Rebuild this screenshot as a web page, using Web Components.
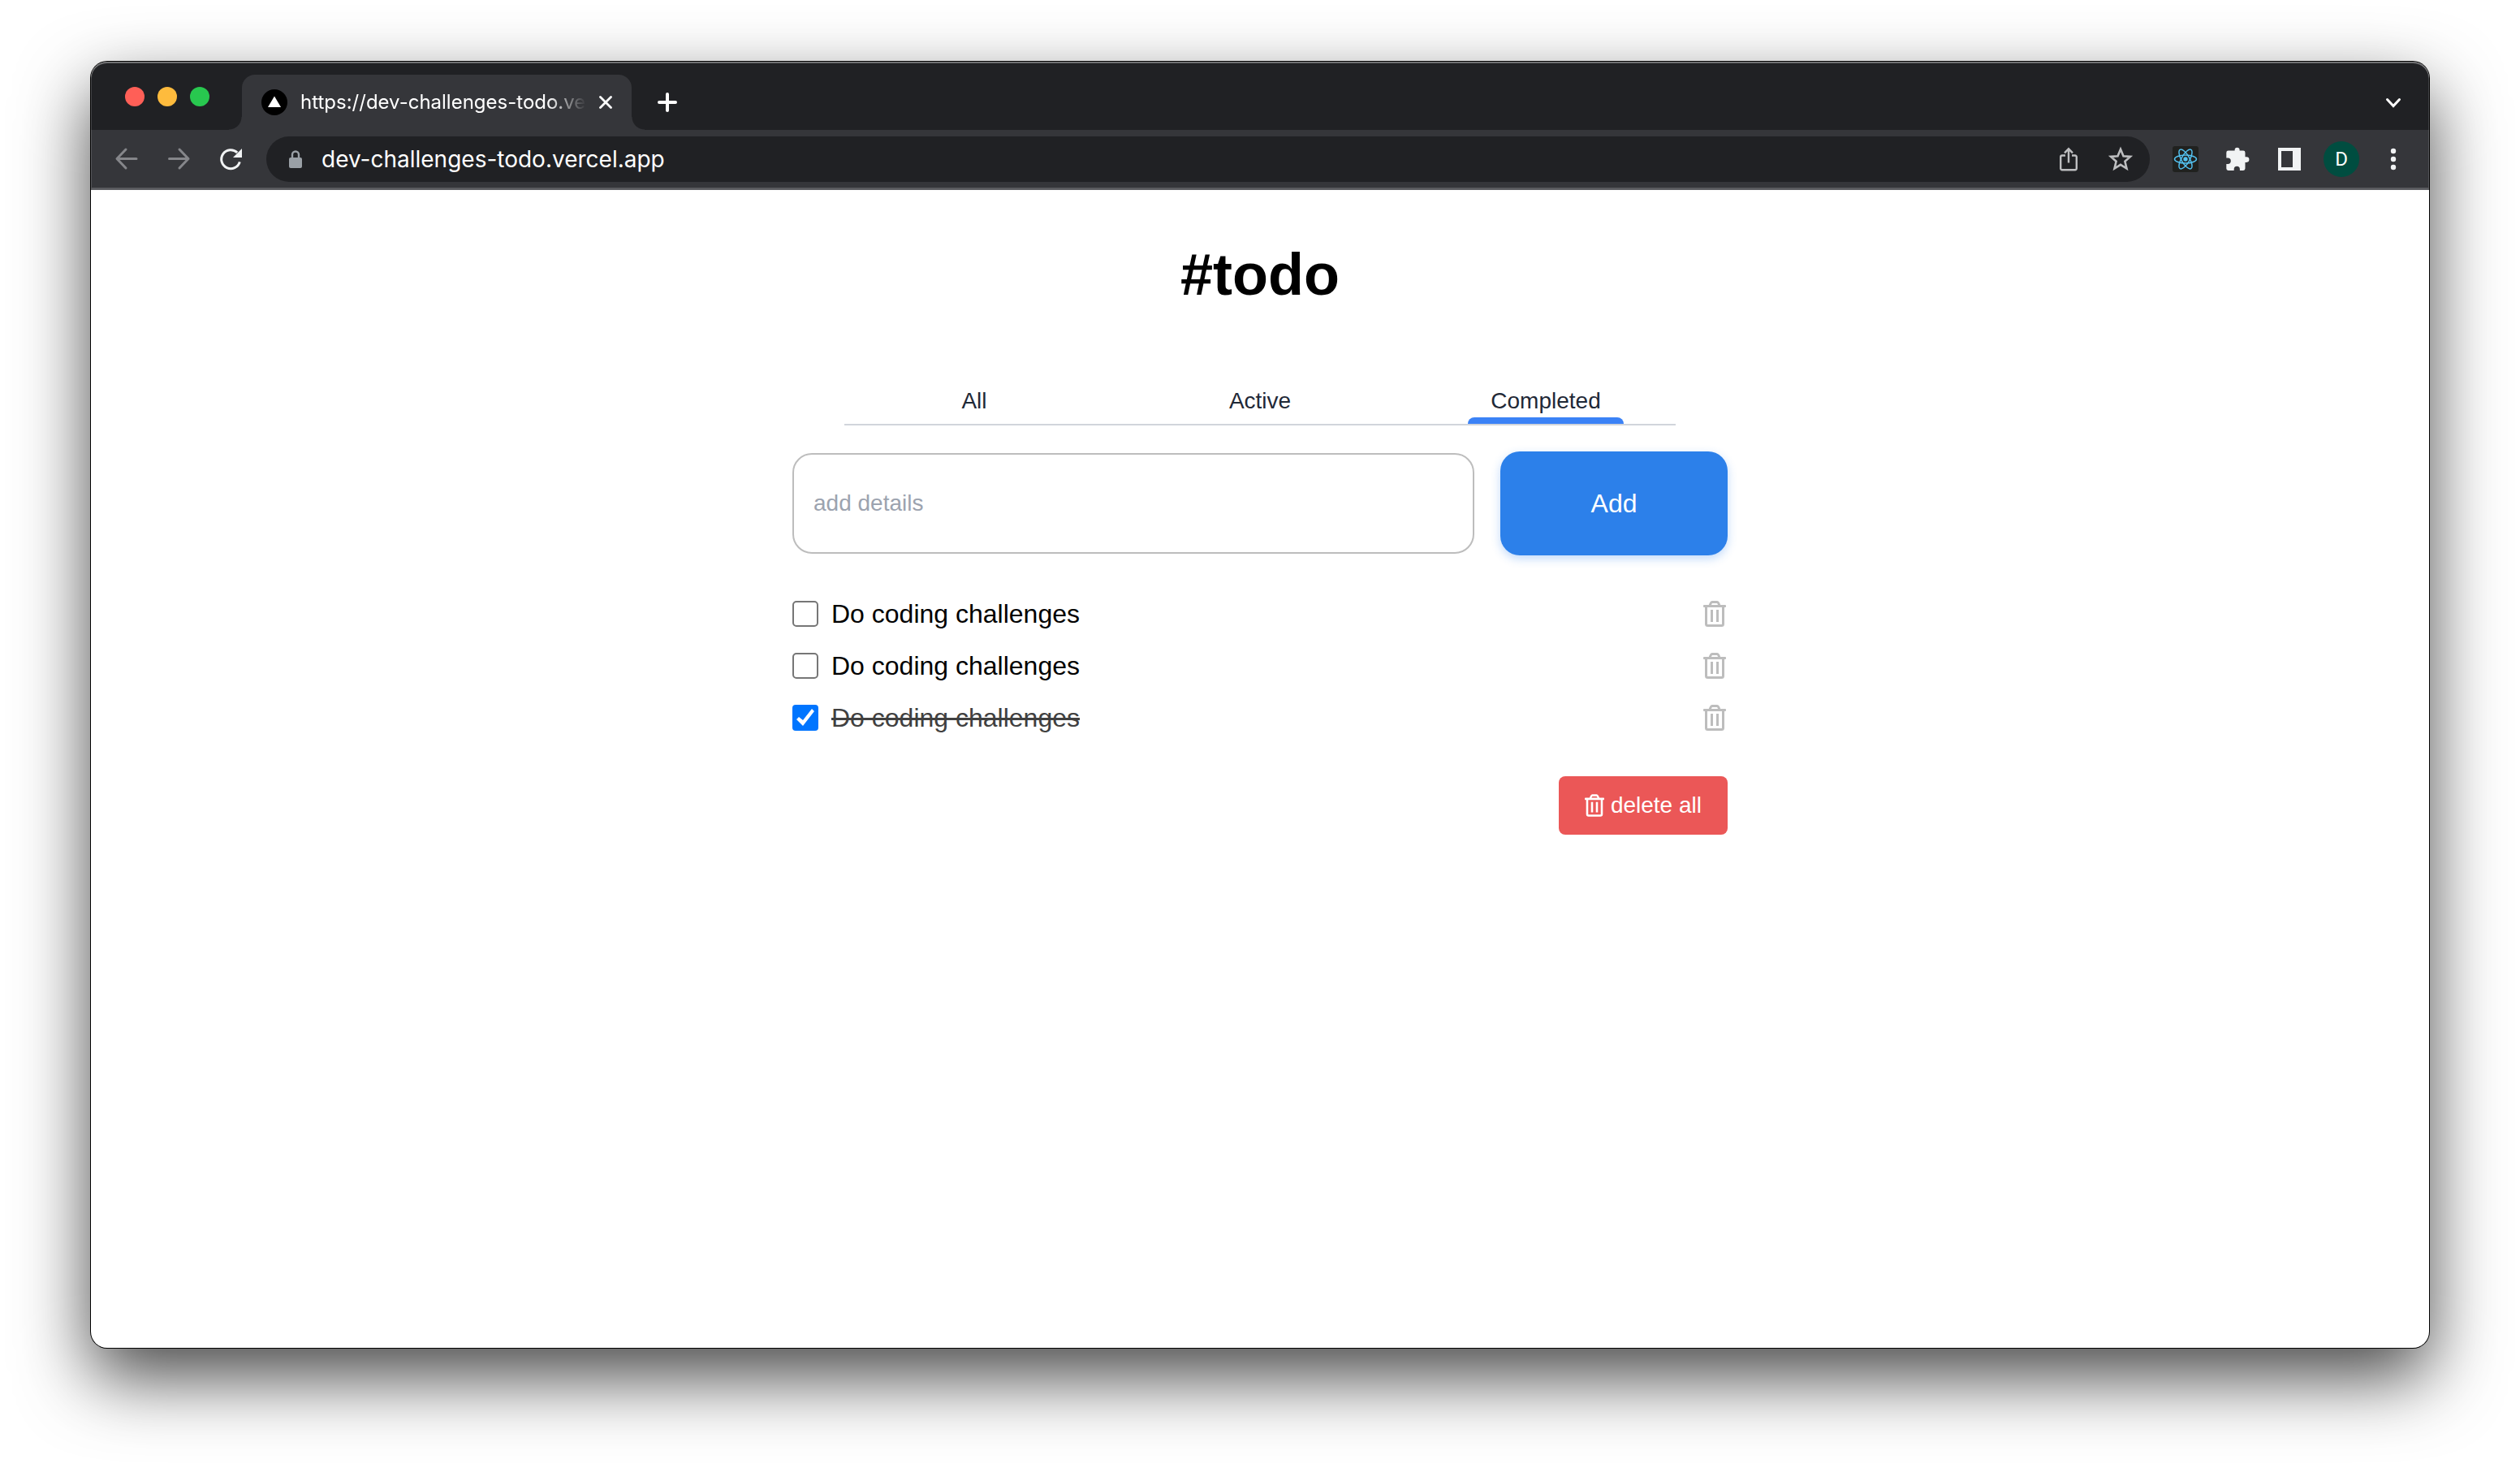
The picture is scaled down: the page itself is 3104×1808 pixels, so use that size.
<!DOCTYPE html>
<html lang="en">
<head>
<meta charset="utf-8">
<title>#todo</title>
<style>
  html { height: 100%; background: #fff; }
  body {
    box-sizing: border-box;
    min-height: 100%;
    margin: 0;
    padding: 76px 112px 148px;
    display: flex;
    font-family: "Liberation Sans", Arial, sans-serif;
    overflow: hidden;
  }
</style>
</head>
<body>
<browser-window>
  <tab-strip slot="strip">https://dev-challenges-todo.vercel.app</tab-strip>
  <browser-toolbar slot="toolbar" url="dev-challenges-todo.vercel.app"></browser-toolbar>
  <todo-app></todo-app>
</browser-window>

<script>
const ICONS = {
  back: [32, '<path d="M28 15.500H4.500M15 4 4 15.500 15 27" fill="none" stroke="currentColor" stroke-width="3" stroke-linecap="round" stroke-linejoin="round"/>'],
  forward: [32, '<path d="M4.500 15.500H28M17 4 28 15.500 17 27" fill="none" stroke="currentColor" stroke-width="3" stroke-linecap="round" stroke-linejoin="round"/>'],
  reload: [32, '<path d="M27.300 19.300A11.500 11.500 0 1 1 24.200 7.900" fill="none" stroke="currentColor" stroke-width="3"/><path d="M30 3v11H19z" fill="currentColor"/>'],
  lock: [32, '<path d="M10 14h12a2 2 0 0 1 2 2v9a2 2 0 0 1-2 2H10a2 2 0 0 1-2-2v-9a2 2 0 0 1 2-2z" fill="currentColor"/><path d="M12 15v-4.500a4 4 0 0 1 8 0V15" fill="none" stroke="currentColor" stroke-width="2.400"/>'],
  share: [32, '<path d="M12 11.500H8A1.800 1.800 0 0 0 6.200 13.300v14A1.800 1.800 0 0 0 8 29.200h16a1.800 1.800 0 0 0 1.800-1.900v-14A1.800 1.800 0 0 0 24 11.500h-4M16 20.500V4M11 8.300 16 3.300l5 5" fill="none" stroke="currentColor" stroke-width="2.400"/>'],
  star: [32, '<path d="M16 3.800 19.500 12.200 28 12.900 21.400 18.700 23.500 27.500 16 22.800 8.500 27.500 10.600 18.700 4 12.900 12.500 12.200z" fill="none" stroke="currentColor" stroke-width="2.600"/>'],
  react: [32, '<rect width="32" height="32" rx="3" fill="#20211f"/><g fill="none" stroke="#53c1f0" stroke-width="1.500"><ellipse cx="16" cy="16" rx="13.500" ry="5"/><ellipse cx="16" cy="16" rx="13.500" ry="5" transform="rotate(60 16 16)"/><ellipse cx="16" cy="16" rx="13.500" ry="5" transform="rotate(120 16 16)"/></g><circle cx="16" cy="16" r="2.700" fill="#53c1f0"/>'],
  puzzle: [32, '<path d="M12.600 5.500v-.700a3 3 0 0 1 6 0v.700h4.500a2.400 2.400 0 0 1 2.400 2.400v5.400h1.600a3.300 3.300 0 0 1 0 6.600h-1.600v7.600a2.400 2.400 0 0 1-2.400 2.400h-4.200v-1.500a3.600 3.600 0 0 0-7.200 0v1.500H4.700A2.400 2.400 0 0 1 2.300 27.500V22h1.800a3.700 3.700 0 0 0 0-7.400H2.300V7.900a2.400 2.400 0 0 1 2.400-2.400z" fill="currentColor"/>'],
  panel: [32, '<path d="M2 2h28v28H2zM6 6v20h14V6z" fill="currentColor" fill-rule="evenodd"/>'],
  dots: [32, '<g fill="currentColor"><circle cx="16" cy="6" r="3.200"/><circle cx="16" cy="16" r="3.200"/><circle cx="16" cy="26" r="3.200"/></g>'],
  close: [16, '<path d="M1.500 1.500 14.500 14.500M14.500 1.500 1.500 14.500" stroke="currentColor" stroke-width="2.800" stroke-linecap="round"/>'],
  plus: [24, '<path d="M12 2v20M2 12h20" stroke="currentColor" stroke-width="4" stroke-linecap="round"/>'],
  chevron: [32, '<path d="M8.500 12.500 16 20.500 23.500 12.500" fill="none" stroke="currentColor" stroke-width="3" stroke-linecap="round"/>'],
  favicon: [32, '<circle cx="16" cy="16" r="16"/><path d="M16 8.500 24 22H8z" fill="#fff"/>'],
  trash: [28, '<path d="M8 5.500 9.500 2.500Q10 1.500 11 1.500h6q1 0 1.500 1L20 5.500" fill="none" stroke="currentColor" stroke-width="2.800"/><path d="M1 5h26a1 1 0 0 1 1 1v1a1 1 0 0 1-1 1H1a1 1 0 0 1-1-1V6a1 1 0 0 1 1-1z" fill="currentColor"/><path d="M3.500 7v21.500a2 2 0 0 0 2 2h17a2 2 0 0 0 2-2V7" fill="none" stroke="currentColor" stroke-width="3"/><path d="M9 11h3v15H9zM16 11h3v15h-3z" fill="currentColor"/>', 32]
};

function component(name, render) {
  customElements.define(name, class extends HTMLElement {
    constructor() { super(); this.attachShadow({ mode: 'open' }); }
    connectedCallback() {
      const t = document.createElement('template');
      t.innerHTML = render(this);
      this.shadowRoot.replaceChildren(t.content.cloneNode(true));
    }
  });
}

const BUTTON = 'button{margin:0;padding:0;border:0;background:none;color:inherit;font:inherit;display:flex;align-items:center;justify-content:center;cursor:pointer}';

component('ui-icon', el => {
  const [w, art, h = w] = ICONS[el.getAttribute('name')];
  const size = Number(el.getAttribute('width')) || w;
  return `<style>:host{display:block;flex:none;line-height:0}</style>
    <svg width="${size}" height="${Math.ceil(size * h / w)}" viewBox="0 0 ${w} ${h}" aria-hidden="true">${art}</svg>`;
});

component('icon-button', el => `
  <style>${BUTTON}
    :host{display:block;flex:none}
    button{width:56px;height:56px}
  </style>
  <button type="button" aria-label="${el.getAttribute('label')}"><ui-icon name="${el.getAttribute('icon')}"></ui-icon></button>`);

component('browser-window', () => `
  <style>
    :host{
      flex:1;display:flex;flex-direction:column;min-width:0;
      border-radius:20px;background:#fff;
      box-shadow:0 0 0 1px #000,0 36px 88px rgba(0,0,0,.72);
    }
    header{position:relative;border-radius:20px 20px 0 0;overflow:hidden;background:#202124;border-bottom:2px solid #5d5e62}
    header::after{content:"";position:absolute;inset:0;border-radius:inherit;pointer-events:none;box-shadow:inset 0 0 0 1px rgba(255,255,255,.16),inset 0 2px rgba(255,255,255,.3)}
    main{flex:1}
  </style>
  <header><slot name="strip"></slot><slot name="toolbar"></slot></header>
  <main><slot></slot></main>`);

component('window-controls', () => `
  <style>${BUTTON}
    :host{display:flex;gap:16px}
    button{width:24px;height:24px;border-radius:50%}
    .close{background:#ff5f57}.min{background:#febb3d}.max{background:#28c84f}
  </style>
  <button type="button" class="close" aria-label="Close"></button>
  <button type="button" class="min" aria-label="Minimise"></button>
  <button type="button" class="max" aria-label="Zoom"></button>`);

component('browser-tab', () => `
  <style>${BUTTON}
    :host{
      position:relative;box-sizing:border-box;width:480px;height:68px;padding:0 24px;
      display:flex;align-items:center;gap:16px;
      background:#35363a;border-radius:16px 16px 0 0;color:#fff;
    }
    :host::before,:host::after{content:"";position:absolute;bottom:0;width:16px;height:16px}
    :host::before{right:100%;background:radial-gradient(circle at 0 0,transparent 15px,#35363a 16px)}
    :host::after{left:100%;background:radial-gradient(circle at 100% 0,transparent 15px,#35363a 16px)}
    .title{
      flex:1;min-width:0;overflow:hidden;white-space:nowrap;font-size:24px;line-height:32px;
      -webkit-mask-image:linear-gradient(90deg,#000 calc(100% - 48px),transparent);
    }
  </style>
  <ui-icon name="favicon"></ui-icon>
  <span class="title"><slot></slot></span>
  <button type="button" aria-label="Close tab"><ui-icon name="close"></ui-icon></button>`);

component('tab-strip', () => `
  <style>${BUTTON}
    :host{display:flex;align-items:center;padding:16px 16px 0 42px;color:#fff;font-family:Inter,sans-serif}
    window-controls{align-self:flex-start;margin:15px 40px 0 0}
    .new{margin-left:32px}
    icon-button{margin-left:auto}
  </style>
  <window-controls></window-controls>
  <browser-tab><slot></slot></browser-tab>
  <button type="button" class="new" aria-label="New tab"><ui-icon name="plus"></ui-icon></button>
  <icon-button icon="chevron" label="Search tabs"></icon-button>`);

component('browser-toolbar', el => `
  <style>${BUTTON}
    :host{display:flex;align-items:center;gap:16px;padding:8px 16px;background:#35363a;color:#f1f3f4;font-family:Inter,sans-serif}
    nav,.actions{display:flex;gap:8px}
    .off{color:#85868a}
    .omnibox{flex:1;min-width:0;display:flex;align-items:center;gap:8px;height:56px;padding:0 8px 0 20px;box-sizing:border-box;border-radius:28px;background:#202124;color:#bdbec0}
    .omnibox ui-icon{color:#9aa0a6}
    input{flex:1;min-width:0;margin:0 0 0 8px;padding:0;border:0;outline:0;background:none;color:#fff;font:28px/36px Inter,sans-serif}
    .profile{width:56px;height:56px}
    .profile span{width:44px;height:44px;border-radius:50%;background:#004d40;color:#fff;font:24px/44px Roboto,sans-serif;text-align:center}
  </style>
  <nav>
    <icon-button class="off" icon="back" label="Back"></icon-button>
    <icon-button class="off" icon="forward" label="Forward"></icon-button>
    <icon-button icon="reload" label="Reload"></icon-button>
  </nav>
  <div class="omnibox">
    <ui-icon name="lock"></ui-icon>
    <input type="text" aria-label="Address" value="${el.getAttribute('url')}">
    <icon-button icon="share" label="Share"></icon-button>
    <icon-button icon="star" label="Bookmark"></icon-button>
  </div>
  <div class="actions">
    <icon-button icon="react" label="React Developer Tools"></icon-button>
    <icon-button icon="puzzle" label="Extensions"></icon-button>
    <icon-button icon="panel" label="Side panel"></icon-button>
    <button type="button" class="profile"><span>D</span></button>
    <icon-button icon="dots" label="Menu"></icon-button>
  </div>`);

component('todo-tab', () => `
  <style>${BUTTON}
    :host{display:block;width:192px;color:#1f2937}
    button{width:100%;font-size:28px;line-height:40px}
    i{display:block;height:8px;border-radius:8px 8px 0 0}
    :host([selected]) i{background:#3b82f6}
  </style>
  <button type="button"><slot></slot></button><i></i>`);

component('todo-tabs', () => `
  <style>:host{display:flex;justify-content:space-between;margin:0 64px;padding:0 64px;border-bottom:2px solid #d1d5db}</style>
  <slot></slot>`);

component('todo-form', () => `
  <style>${BUTTON}
    :host{display:block}
    form{display:flex;align-items:center;gap:32px}
    input{flex:1;min-width:0;box-sizing:border-box;height:124px;margin:0;padding:0 24px;border:2px solid #bdbdbd;border-radius:24px;outline:0;background:#fff;font:28px/40px "Liberation Sans",Arial,sans-serif}
    input::placeholder{color:#9ca3af;opacity:1}
    button{width:280px;height:128px;border-radius:24px;background:#2c80ea;color:#fff;font-size:32px;line-height:48px;box-shadow:0 4px 12px rgba(47,128,237,.3)}
  </style>
  <form><input type="text" placeholder="add details" aria-label="add details"><button type="button">Add</button></form>`);

component('todo-item', el => `
  <style>${BUTTON}
    :host{display:flex;align-items:center;justify-content:space-between;height:48px;color:#000}
    label{display:flex;align-items:center;gap:16px;font-size:32px;line-height:48px}
    input{appearance:none;box-sizing:border-box;width:32px;height:32px;margin:0;border:2px solid #767676;border-radius:5px;background:#fff}
    input:checked{border:0;border-radius:4px;background:#0075ff}
    input:checked::before{content:"";display:block;width:32px;height:32px;background:#fff;clip-path:polygon(5px 18px,8px 15px,13px 19px,24px 5px,27px 8px,13px 26px)}
    input:checked + span{color:#404040;text-decoration:line-through;text-decoration-thickness:3px}
    button{width:32px;height:32px;color:#bdbdbd}
  </style>
  <label><input type="checkbox"${el.hasAttribute('done') ? ' checked' : ''}><span><slot></slot></span></label>
  <button type="button" aria-label="Delete"><ui-icon name="trash"></ui-icon></button>`);

component('todo-app', () => `
  <style>${BUTTON}
    :host{display:block;box-sizing:border-box;max-width:1152px;margin:0 auto;padding-top:64px}
    h1{margin:0 0 96px;text-align:center;font-size:72px;line-height:80px;font-weight:700;color:#000}
    todo-form{margin-top:32px}
    .list{display:grid;gap:16px;margin:48px 0}
    .clear{margin-left:auto;height:72px;padding:0 32px;gap:8px;border-radius:8px;background:#eb5757;color:#fff;font-size:28px;line-height:40px}
  </style>
  <h1>#todo</h1>
  <todo-tabs>
    <todo-tab>All</todo-tab>
    <todo-tab>Active</todo-tab>
    <todo-tab selected>Completed</todo-tab>
  </todo-tabs>
  <todo-form></todo-form>
  <div class="list">
    <todo-item>Do coding challenges</todo-item>
    <todo-item>Do coding challenges</todo-item>
    <todo-item done>Do coding challenges</todo-item>
  </div>
  <button type="button" class="clear"><ui-icon name="trash" width="24"></ui-icon>delete all</button>`);
</script>
</body>
</html>
